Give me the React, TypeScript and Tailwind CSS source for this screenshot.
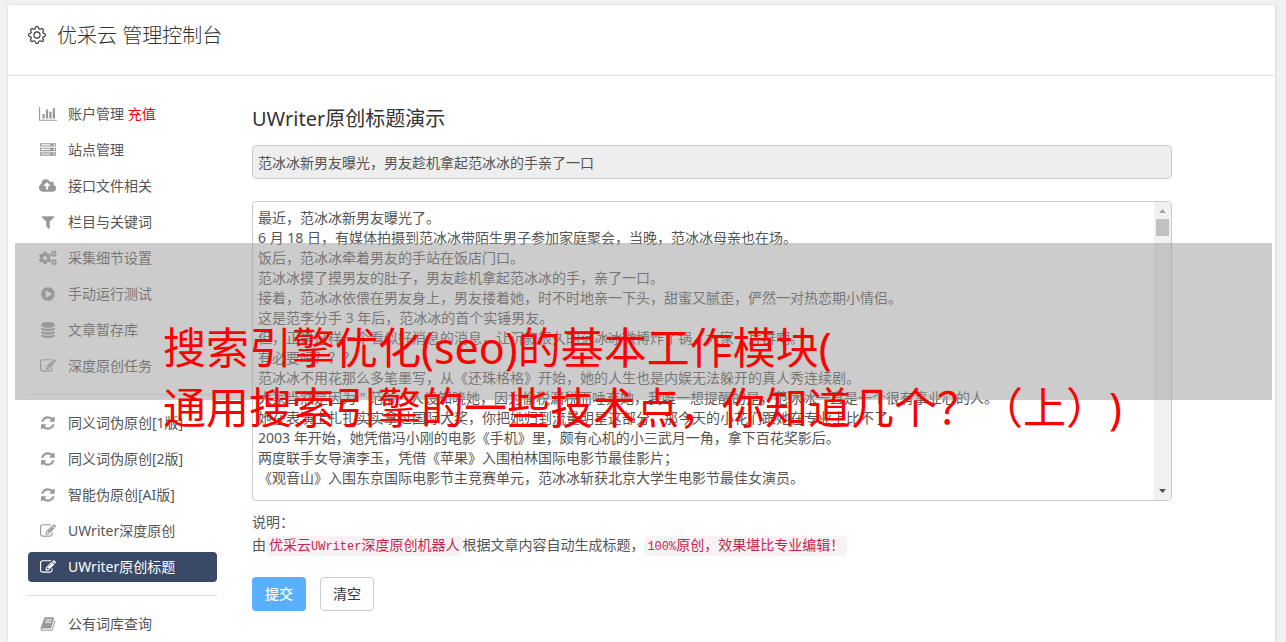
import { useState, type ReactNode } from "react";
import { BsGear } from "react-icons/bs";
import { FaCogs } from "react-icons/fa";

const ARTICLE = [
  "最近，范冰冰新男友曝光了。",
  "6 月 18 日，有媒体拍摄到范冰冰带陌生男子参加家庭聚会，当晚，范冰冰母亲也在场。",
  "饭后，范冰冰牵着男友的手站在饭店门口。",
  "范冰冰摸了摸男友的肚子，男友趁机拿起范冰冰的手，亲了一口。",
  "接着，范冰冰依偎在男友身上，男友搂着她，时不时地亲一下头，甜蜜又腻歪，俨然一对热恋期小情侣。",
  "这是范李分手 3 年后，范冰冰的首个实锤男友。",
  "但，正是这样一个看似好消息的消息，让沉寂很久的范冰冰微博炸了锅，大家一片群嘲。",
  "有必要吗？？？",
  "范冰冰不用花那么多笔墨写，从《还珠格格》开始，她的人生也是内娱无法躲开的真人秀连续剧。",
  '大家当然是因为 " 范爷 " 人设知晓她，因为偷税漏税而唾弃她，我唯一想提醒的是，范冰冰一直是一个很有事业心的人。',
  "她在表演上扎扎实实拿过国际大奖，你把她归到流量明星这部分，那今天的小花们跟她在专业上比不了",
  "2003 年开始，她凭借冯小刚的电影《手机》里，颇有心机的小三武月一角，拿下百花奖影后。",
  "两度联手女导演李玉，凭借《苹果》入围柏林国际电影节最佳影片；",
  "《观音山》入围东京国际电影节主竞赛单元，范冰冰斩获北京大学生电影节最佳女演员。",
].join("\n");

const TITLE = "范冰冰新男友曝光，男友趁机拿起范冰冰的手亲了一口";

const ICONS = {
  chart: {
    width: 2048,
    path: "M640 896v512h-256v-512h256zm384-512v1024h-256v-1024h256zm1024 1152v128h-2048v-1536h128v1408h1920zm-640-896v768h-256v-768h256zm384-384v1152h-256v-1152h256z",
  },
  server: {
    width: 1792,
    path: "M128 1408h1024v-128h-1024v128zm0-512h1024v-128h-1024v128zm1568 448q0-40-28-68t-68-28-68 28-28 68 28 68 68 28 68-28 28-68zm-1568-960h1024v-128h-1024v128zm1568 448q0-40-28-68t-68-28-68 28-28 68 28 68 68 28 68-28 28-68zm0-512q0-40-28-68t-68-28-68 28-28 68 28 68 68 28 68-28 28-68zm96 832v384h-1792v-384h1792zm0-512v384h-1792v-384h1792zm0-512v384h-1792v-384h1792z",
  },
  upload: {
    width: 1920,
    path: "M1280 864q0-14-9-23l-352-352q-9-9-23-9t-23 9l-351 351q-10 12-10 24 0 14 9 23t23 9h224v352q0 13 9.5 22.5t22.5 9.5h192q13 0 22.5-9.5t9.5-22.5v-352h224q13 0 22.5-9.5t9.5-22.5zm640 288q0 159-112.5 271.5t-271.5 112.5h-1088q-185 0-316.5-131.5t-131.5-316.5q0-130 70-240t188-165q-2-30-2-43 0-212 150-362t362-150q156 0 285.5 87t188.5 231q71-62 166-62 106 0 181 75t75 181q0 76-41 138 130 31 213.5 135.5t83.5 238.5z",
  },
  filter: {
    width: 1792,
    path: "M1595 295q17 41-14 70l-493 493v742q0 42-39 59-13 5-25 5-27 0-45-19l-256-256q-19-19-19-45v-486l-493-493q-31-29-14-70 17-39 59-39h1280q42 0 59 39z",
  },
  play: {
    width: 1792,
    path: "M896 128q209 0 385.5 103t279.5 279.5 103 385.5-103 385.5-279.5 279.5-385.5 103-385.5-103-279.5-279.5-103-385.5 103-385.5 279.5-279.5 385.5-103zm384 823q32-18 32-55t-32-55l-544-320q-31-19-64-1-32 19-32 56v640q0 37 32 56 16 8 32 8 17 0 32-9z",
  },
  database: {
    width: 1792,
    path: "M896 768q237 0 443-43t325-127v170q0 69-103 128t-280 93.5-385 34.5-385-34.5-280-93.5-103-128v-170q119 84 325 127t443 43zm0 768q237 0 443-43t325-127v170q0 69-103 128t-280 93.5-385 34.5-385-34.5-280-93.5-103-128v-170q119 84 325 127t443 43zm0-384q237 0 443-43t325-127v170q0 69-103 128t-280 93.5-385 34.5-385-34.5-280-93.5-103-128v-170q119 84 325 127t443 43zm0-1152q208 0 385 34.5t280 93.5 103 128v128q0 69-103 128t-280 93.5-385 34.5-385-34.5-280-93.5-103-128v-128q0-69 103-128t280-93.5 385-34.5z",
  },
  edit: {
    width: 1792,
    path: "M888 1184l116-116-152-152-116 116v56h96v96h56zm440-720q-16-16-33 1l-350 350q-17 17-1 33t33-1l350-350q17-17 1-33zm80 594v190q0 119-84.5 203.5t-203.5 84.5h-832q-119 0-203.5-84.5t-84.5-203.5v-832q0-119 84.5-203.5t203.5-84.5h832q63 0 117 25 15 7 18 23 3 17-9 29l-49 49q-14 14-32 8-23-6-45-6h-832q-66 0-113 47t-47 113v832q0 66 47 113t113 47h832q66 0 113-47t47-113v-126q0-13 9-22l64-64q15-15 35-7t20 29zm-96-738l288 288-672 672h-288v-288zm444 132l-92 92-288-288 92-92q28-28 68-28t68 28l152 152q28 28 28 68t-28 68z",
  },
  refresh: {
    width: 1664,
    path: "M1511 1056q0 5-1 7-64 268-268 434.5t-478 166.5q-146 0-282.5-55t-243.5-157l-129 129q-19 19-45 19t-45-19-19-45v-448q0-26 19-45t45-19h448q26 0 45 19t19 45-19 45l-137 137q71 66 161 102t187 36q134 0 250-65t186-179q11-17 53-117 8-23 30-23h192q13 0 22.5 9.5t9.5 22.5zm25-800v448q0 26-19 45t-45 19h-448q-26 0-45-19t-19-45 19-45l138-138q-148-137-349-137-134 0-250 65t-186 179q-11 17-53 117-8 23-30 23h-199q-13 0-22.5-9.5t-9.5-22.5v-7q65-268 270-434.5t480-166.5q146 0 284 55.5t245 156.5l130-129q19-19 45-19t45 19 19 45z",
  },
  book: {
    width: 1792,
    path: "M1703 478q40 57 18 129l-275 906q-19 64-76.5 107.5t-122.5 43.5h-923q-77 0-148.5-53.5t-99.5-131.5q-24-67-2-127 0-4 3-27t4-37q1-8-3-21.5t-3-19.5q2-11 8-21t16.5-23.5 16.5-23.5q23-38 45-91.5t30-91.5q3-10 .5-30t-.5-28q3-11 17-28t17-23q21-36 42-92t25-90q1-9-2.5-32t.5-28q4-13 22-30.5t22-22.5q19-26 42.5-84.5t27.5-96.5q1-8-3-25.5t-2-26.5q2-8 9-18t18-23 17-21q8-12 16.5-30.5t15-35 16-36 19.5-32 26.5-23.5 36-11.5 47.5 5.5l-1 3q38-9 51-9h761q74 0 114 56t18 130l-274 906q-36 119-71.5 153.5t-128.5 34.5h-869q-27 0-38 15-11 16-1 43 24 70 144 70h923q29 0 56-15.5t35-41.5l300-987q7-22 5-57 38 15 59 43zm-1064 2q-4 13 2 22.5t20 9.5h608q13 0 25.5-9.5t16.5-22.5l21-64q4-13-2-22.5t-20-9.5h-608q-13 0-25.5 9.5t-16.5 22.5zm-83 256q-4 13 2 22.5t20 9.5h608q13 0 25.5-9.5t16.5-22.5l21-64q4-13-2-22.5t-20-9.5h-608q-13 0-25.5 9.5t-16.5 22.5z",
  },
};

type IconName = keyof typeof ICONS | "cogs";

interface MenuItem {
  icon: IconName;
  label: string;
  note?: string;
}

const MENU: MenuItem[][] = [
  [
    { icon: "chart", label: "账户管理", note: "充值" },
    { icon: "server", label: "站点管理" },
    { icon: "upload", label: "接口文件相关" },
    { icon: "filter", label: "栏目与关键词" },
    { icon: "cogs", label: "采集细节设置" },
    { icon: "play", label: "手动运行测试" },
    { icon: "database", label: "文章暂存库" },
    { icon: "edit", label: "深度原创任务" },
  ],
  [
    { icon: "refresh", label: "同义词伪原创[1版]" },
    { icon: "refresh", label: "同义词伪原创[2版]" },
    { icon: "refresh", label: "智能伪原创[AI版]" },
    { icon: "edit", label: "UWriter深度原创" },
    { icon: "edit", label: "UWriter原创标题" },
  ],
  [{ icon: "book", label: "公有词库查询" }],
];

export default function App() {
  const [active, setActive] = useState("UWriter原创标题");
  const [title, setTitle] = useState(TITLE);
  const [article, setArticle] = useState(ARTICLE);

  const handleClear = () => {
    setTitle("");
    setArticle("");
  };

  return (
    <div className="relative flex min-h-screen flex-col bg-[#f1f1f1] pt-1 pr-[9px] pl-[7px] font-['Noto_Sans','Noto_Sans_CJK_SC',sans-serif] text-sm text-[#555] [text-spacing-trim:space-all]">
      <div className="flex-1 rounded-t border border-r-2 border-b-0 border-[#e5e5e5] bg-white">
        <header className="flex h-[71px] items-start gap-[11px] border-b border-[#e5e5e5] px-5 pt-[17px] text-[#333]">
          <BsGear className="mt-1 size-[18px]" />
          <h1 className="text-xl font-light">优采云 管理控制台</h1>
        </header>

        <div className="flex gap-[35px] px-5 pt-[23px]">
          <nav className="w-[189px] shrink-0">
            {MENU.map((group, index) => (
              <ul
                key={index}
                className="flex flex-col gap-1.5 border-[#ddd] not-first:mt-[13px] not-first:border-t not-first:pt-[13px]"
              >
                {group.map((item) => (
                  <MenuLink
                    key={item.label}
                    item={item}
                    isActive={item.label === active}
                    onSelect={() => setActive(item.label)}
                  />
                ))}
              </ul>
            ))}
          </nav>

          <main className="max-w-[920px] flex-1 pt-1.5">
            <h2 className="text-xl text-[#333]">UWriter原创标题演示</h2>
            <input
              aria-label="标题"
              readOnly
              value={title}
              className="mt-3 block h-[34px] w-full rounded border border-[#ccc] bg-[#eee] px-[5px] outline-none"
            />
            <div className="mt-[22px] flex h-[300px] overflow-hidden rounded border border-[#ccc]">
              <textarea
                aria-label="文章内容"
                value={article}
                onChange={(event) => setArticle(event.target.value)}
                className="h-full flex-1 resize-none overflow-hidden px-[5px] py-1.5 leading-5 outline-none"
              />
              <ScrollTrack />
            </div>

            <div className="mt-[9px] leading-[23px]">
              <p>说明：</p>
              <p>
                由
                <Code>
                  优采云<span className="text-xs">UWriter</span>深度原创机器人
                </Code>
                根据文章内容自动生成标题，
                <Code>
                  <span className="text-xs">100%</span>原创，效果堪比专业编辑！
                </Code>
              </p>
            </div>

            <div className="mt-[21px] flex gap-3.5">
              <button
                type="button"
                className="h-[34px] w-[54px] rounded bg-[#5aafff] font-medium text-white"
              >
                提交
              </button>
              <button
                type="button"
                onClick={handleClear}
                className="h-[34px] w-[54px] rounded border border-[#ccc] bg-white text-[#333]"
              >
                清空
              </button>
            </div>
          </main>
        </div>
      </div>

      <Caption />
    </div>
  );
}

interface MenuLinkProps {
  item: MenuItem;
  isActive: boolean;
  onSelect: () => void;
}

function MenuLink({ item, isActive, onSelect }: MenuLinkProps) {
  return (
    <li>
      <a
        href="#"
        onClick={onSelect}
        className={
          isActive
            ? "flex h-[30px] items-center gap-[10px] rounded bg-[#3a4a66] px-[10px] text-white"
            : "flex h-[30px] items-center gap-[10px] rounded px-[10px]"
        }
      >
        <span
          className={
            isActive
              ? "flex w-5 justify-center"
              : "flex w-5 justify-center text-[#999]"
          }
        >
          <Icon name={item.icon} />
        </span>
        <span>
          {item.label}
          {item.note ? <span className="text-[#f00]"> {item.note}</span> : null}
        </span>
      </a>
    </li>
  );
}

function Icon({ name }: { name: IconName }) {
  if (name === "cogs") {
    return <FaCogs className="h-4 w-[18px]" />;
  }

  const { width, path } = ICONS[name];

  return (
    <svg
      viewBox={`0 0 ${width} 1792`}
      className="h-4 shrink-0"
      fill="currentColor"
      aria-hidden="true"
    >
      <path d={path} />
    </svg>
  );
}

function ScrollTrack() {
  return (
    <div className="flex w-[17px] shrink-0 flex-col items-center bg-[#f1f1f1]">
      <svg viewBox="0 0 17 17" className="size-[17px]" aria-hidden="true">
        <path d="M5 11h7L8.500 7z" fill="#a3a3a3" />
      </svg>
      <div className="h-[17px] w-[13px] bg-[#c1c1c1]" />
      <svg viewBox="0 0 17 17" className="mt-auto size-[17px]" aria-hidden="true">
        <path d="M5 6h7l-3.500 4z" fill="#505050" />
      </svg>
    </div>
  );
}

function Code({ children }: { children: ReactNode }) {
  return (
    <code className="rounded bg-[#f9f2f4] px-[3px] py-0.5 font-['Liberation_Mono','Noto_Sans_CJK_SC',monospace] text-sm leading-[19px] text-[#c7254e]">
      {children}
    </code>
  );
}

// Translucent band with the article headline laid over the console.
function Caption() {
  return (
    <div className="pointer-events-none absolute top-[243px] right-3.5 left-[15px] h-[157px] bg-[#999]/50 pt-[75px] pl-[148px] text-[43px] leading-[60px] whitespace-nowrap text-[#f00]">
      <p>搜索引擎优化(seo)的基本工作模块(</p>
      <p>通用搜索引擎的一些技术点，你知道几个？（上）)</p>
    </div>
  );
}
